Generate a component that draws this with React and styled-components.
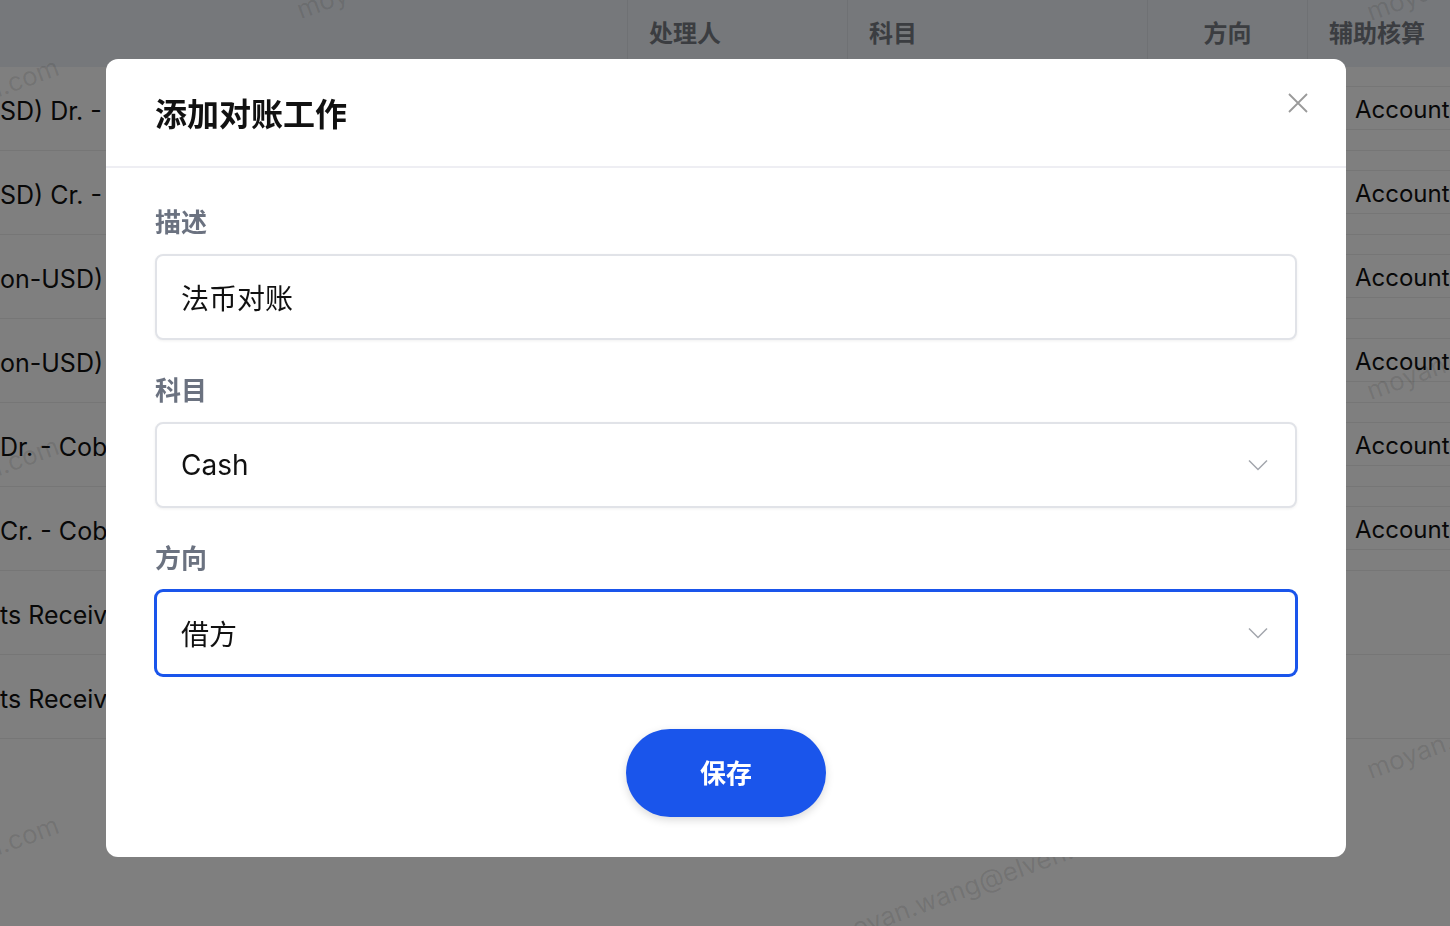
import React from "react";
import styled, { createGlobalStyle, css } from "styled-components";

const GlobalStyle = createGlobalStyle`
  html, body {
    margin: 0;
    padding: 0;
    background: #ffffff;
    overflow: hidden;
  }
  body {
    font-family: Inter, "Noto Sans CJK SC", sans-serif;
    color: #111111;
  }
  * {
    box-sizing: border-box;
  }
`;

const rows = [
  { name: "SD) Dr. - Bank Fee", aux: "Accounts Receivable" },
  { name: "SD) Cr. - Bank Fee", aux: "Accounts Receivable" },
  { name: "on-USD) Dr. - Bank", aux: "Accounts Receivable" },
  { name: "on-USD) Cr. - Bank", aux: "Accounts Receivable" },
  { name: "Dr. - Cobo Wallet", aux: "Accounts Receivable" },
  { name: "Cr. - Cobo Wallet", aux: "Accounts Receivable" },
  { name: "ts Receivable", aux: null },
  { name: "ts Receivable", aux: null },
];

// watermark columns: x start and first baseline y, repeated every 379px
const marks = [
  [-228, 184],
  [302, 23],
  [836, 191],
  [1372, 25],
];

function App() {
  return (
    <>
      <GlobalStyle />
      <Page>
        <Table>
          <HeadRow>
            <HeadCell />
            <HeadCell $divider>处理人</HeadCell>
            <HeadCell $divider>科目</HeadCell>
            <HeadCell $divider $center>
              方向
            </HeadCell>
            <HeadCell $divider>辅助核算</HeadCell>
          </HeadRow>
          {rows.map((r, i) => (
            <Row key={i}>
              <NameCell>{r.name}</NameCell>
              <Cell />
              <Cell />
              <Cell />
              <AuxCell>{r.aux && <AuxBox>{r.aux}</AuxBox>}</AuxCell>
            </Row>
          ))}
        </Table>

        <Watermarks>
          {marks.flatMap(([x, y], c) =>
            [0, 1, 2].map((k) => (
              <Mark key={c + "-" + k} style={{ left: x, top: y + k * 379 - 26 }}>
                moyan.wang@elven.com
              </Mark>
            ))
          )}
        </Watermarks>

        <Overlay>
          <Modal>
            <ModalHeader>
              <Title>添加对账工作</Title>
              <CloseButton aria-label="关闭">
                <svg width="22" height="22" viewBox="0 0 22 22">
                  <path
                    d="M2 2 L20 20 M20 2 L2 20"
                    stroke="#9a9a9a"
                    strokeWidth="1.8"
                    fill="none"
                  />
                </svg>
              </CloseButton>
            </ModalHeader>

            <ModalBody>
              <Field>
                <Label>描述</Label>
                <TextInput readOnly value="法币对账" />
              </Field>
              <Field>
                <Label>科目</Label>
                <SelectBox>
                  <span>Cash</span>
                  <Chevron />
                </SelectBox>
              </Field>
              <Field>
                <Label>方向</Label>
                <SelectBox $focused>
                  <span>借方</span>
                  <Chevron />
                </SelectBox>
              </Field>
              <SaveButton>保存</SaveButton>
            </ModalBody>
          </Modal>
        </Overlay>
      </Page>
    </>
  );
}

function Chevron() {
  return (
    <svg width="20" height="12" viewBox="0 0 20 12">
      <path
        d="M1 1.5 L10 10.5 L19 1.5"
        stroke="#a3a6ad"
        strokeWidth="1.5"
        fill="none"
      />
    </svg>
  );
}

export default App;

const Page = styled.div`
  position: relative;
  width: 100vw;
  height: 100vh;
  overflow: hidden;
  background: #ffffff;
`;

const Table = styled.div`
  display: flex;
  flex-direction: column;
`;

const columns = css`
  display: grid;
  grid-template-columns: 627px 220px 300px 160px 1fr;
`;

const HeadRow = styled.div`
  ${columns};
  height: 67px;
  background: #edf1f6;
`;

const HeadCell = styled.div`
  display: flex;
  align-items: center;
  justify-content: ${(p) => (p.$center ? "center" : "flex-start")};
  padding-left: ${(p) => (p.$center ? "0" : "21px")};
  padding-bottom: 4px;
  font-size: 24px;
  font-weight: 700;
  color: #777b82;
  white-space: nowrap;
  border-left: ${(p) => (p.$divider ? "1px solid #dfe3e8" : "none")};
`;

const Row = styled.div`
  ${columns};
  height: 84px;
  border-bottom: 1px solid #ececec;
`;

const Cell = styled.div``;

const NameCell = styled.div`
  display: flex;
  align-items: center;
  padding-top: 4px;
  font-size: 25px;
  color: #111111;
  white-space: nowrap;
  overflow: hidden;
`;

const AuxCell = styled.div`
  padding: 19px 0 20px 21px;
  white-space: nowrap;
`;

const AuxBox = styled.div`
  height: 44px;
  display: flex;
  align-items: center;
  padding: 3px 0 0 27px;
  border-top: 1px solid #ececec;
  border-bottom: 1px solid #ececec;
  font-size: 24px;
  color: #111111;
`;

const Watermarks = styled.div`
  position: absolute;
  inset: 0;
  pointer-events: none;
`;

const Mark = styled.span`
  position: absolute;
  font-size: 26px;
  line-height: 26px;
  white-space: nowrap;
  color: rgba(0, 0, 0, 0.1);
  transform: rotate(-20deg);
  transform-origin: left bottom;
`;

const Overlay = styled.div`
  position: fixed;
  inset: 0;
  background: rgba(0, 0, 0, 0.5);
  display: flex;
  justify-content: center;
  align-items: flex-start;
  padding-top: 59px;
  padding-left: 2px;
`;

const Modal = styled.div`
  width: 1240px;
  background: #ffffff;
  border-radius: 12px;
  overflow: hidden;
`;

const ModalHeader = styled.div`
  position: relative;
  padding: 36px 49px 31px;
  border-bottom: 2px solid #eeeef3;
`;

const Title = styled.h2`
  margin: 0;
  font-size: 32px;
  line-height: 40px;
  font-weight: 700;
  color: #111111;
`;

const CloseButton = styled.button`
  position: absolute;
  top: 33px;
  right: 37px;
  width: 22px;
  height: 22px;
  padding: 0;
  border: none;
  background: none;
  cursor: pointer;
  display: flex;
`;

const ModalBody = styled.div`
  display: flex;
  flex-direction: column;
  gap: 34px;
  padding: 38px 49px 40px;
`;

const Field = styled.div`
  display: flex;
  flex-direction: column;
  gap: 16px;
`;

const Label = styled.label`
  padding-top: 1px;
  font-size: 26px;
  line-height: 31px;
  font-weight: 600;
  color: #6b7280;
`;

const boxBase = css`
  width: 100%;
  height: 86px;
  border: 2px solid #e1e3e8;
  border-radius: 8px;
  background: #ffffff;
  box-shadow: 0 1px 3px rgba(0, 0, 0, 0.06);
  font-family: inherit;
  font-size: 28px;
  color: #111111;
`;

const TextInput = styled.input`
  ${boxBase};
  padding: 0 24px;
  outline: none;
`;

const SelectBox = styled.div`
  ${boxBase};
  display: flex;
  align-items: center;
  justify-content: space-between;
  padding: 0 27px 0 24px;
  cursor: pointer;

  ${(p) =>
    p.$focused &&
    css`
      border-color: #1a55eb;
      box-shadow: 0 0 0 1px #1a55eb;
    `}
`;

const SaveButton = styled.button`
  align-self: center;
  margin-top: 19px;
  width: 200px;
  height: 88px;
  padding: 0 0 3px;
  border: none;
  border-radius: 44px;
  background: #1a55eb;
  color: #ffffff;
  font-family: inherit;
  font-size: 26px;
  font-weight: 600;
  box-shadow: 0 3px 8px rgba(0, 0, 0, 0.15);
  cursor: pointer;
`;
